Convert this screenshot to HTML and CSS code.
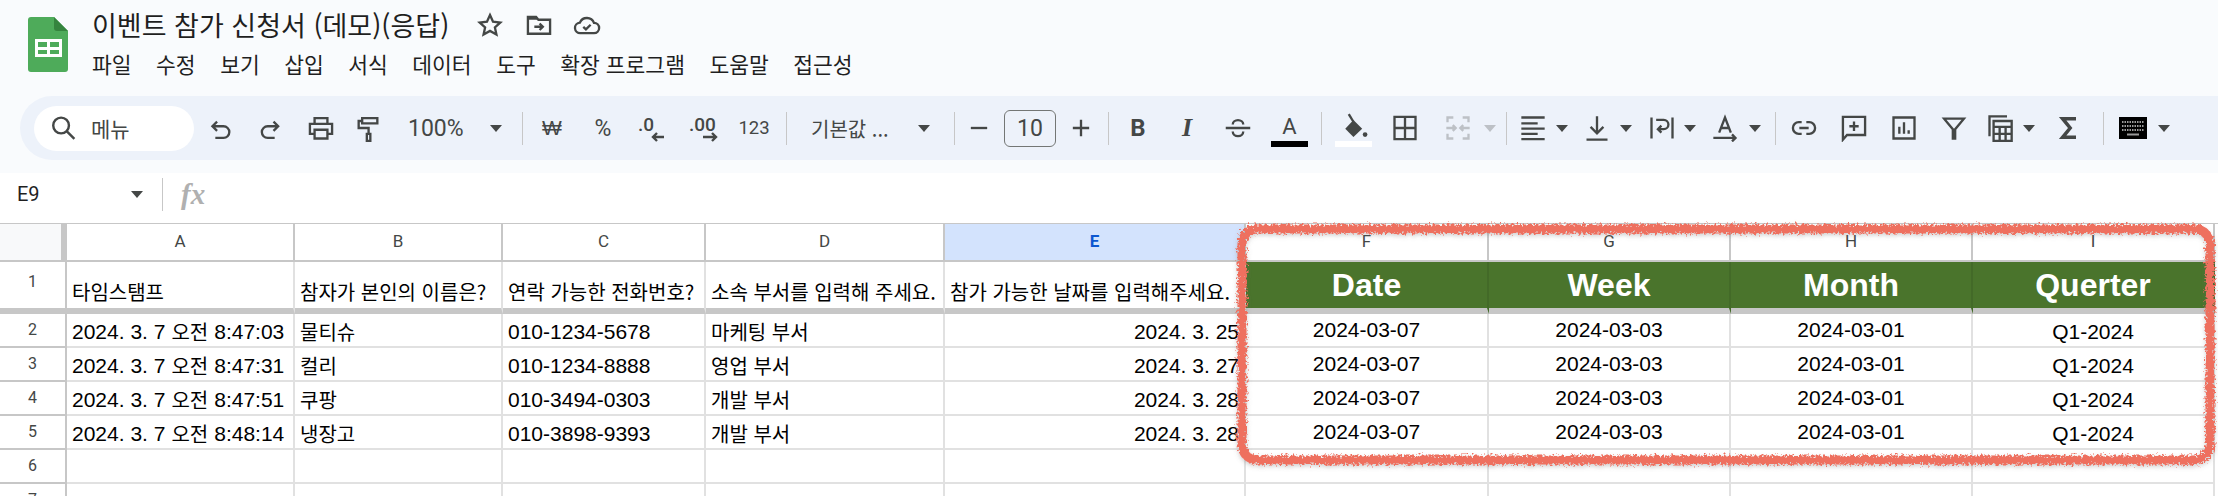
FILE: index.html
```html
<!DOCTYPE html>
<html lang="ko">
<head>
<meta charset="utf-8">
<title>이벤트 참가 신청서 (데모)(응답)</title>
<link rel="stylesheet" href="styles.css">
</head>
<body>
<div class="page">
  <header class="appbar">
    <div class="titlebar">
      <svg class="logo" viewBox="0 0 40 55">
        <path d="M3 0H26L40 14V52a3 3 0 0 1-3 3H3a3 3 0 0 1-3-3V3a3 3 0 0 1 3-3z" fill="#4eab5a"/>
        <path d="M26 0L40 14H29a3 3 0 0 1-3-3z" fill="#35843e"/>
        <path d="M7 22H34V40H7zM10 25V30H19V25zM22 25V30H31V25zM10 33V37H19V33zM22 33V37H31V33z" fill="#fff" fill-rule="evenodd"/>
      </svg>
      <div class="titletext">
        <div class="doc-row">
          <span class="doc-title">이벤트 참가 신청서 (데모)(응답)</span>
          <svg class="ic doc-star" viewBox="0 0 24 24"><path d="M12 3.500l2.600 5.700 6.200.7-4.600 4.200 1.300 6.100L12 17.100l-5.500 3.100 1.300-6.100-4.600-4.200 6.200-.7z"/></svg>
          <svg class="ic doc-folder" viewBox="0 0 24 24"><path d="M2.500 5h7l2 2.500h10v12h-19z"/><path class="solid" d="M2.500 5h7l2 2.500h-9z"/><path d="M8 13.500h7M12.500 10.700l2.800 2.800-2.800 2.800"/></svg>
          <svg class="ic doc-cloud" viewBox="0 0 24 24"><path d="M6.500 19a4.500 4.500 0 0 1-.6-9A6.500 6.500 0 0 1 18 10.200 4.400 4.400 0 0 1 18 19zM8.800 13.600l2.300 2.200 4-4"/></svg>
        </div>
        <nav class="menu">
          <span>파일</span><span>수정</span><span>보기</span><span>삽입</span><span>서식</span><span>데이터</span><span>도구</span><span>확장 프로그램</span><span>도움말</span><span>접근성</span>
        </nav>
      </div>
    </div>
    <div class="toolbar">
      <div class="search">
        <svg class="ic" viewBox="0 0 24 24"><circle cx="10" cy="9.500" r="6.500"/><path d="M14.800 14.300L21 20.500"/></svg>
        <span>메뉴</span>
      </div>
      <svg class="ic" viewBox="0 0 24 24"><path d="M9.500 6.500L5.500 10.500l4 4M5.500 10.500H15a5 5 0 0 1 0 10H8"/></svg>
      <svg class="ic" viewBox="0 0 24 24"><path d="M15 6.500l4 4-4 4M19 10.500H10a5 5 0 0 0 0 10h6"/></svg>
      <svg class="ic" viewBox="0 0 24 24"><path d="M6.500 8V3.500h11V8M6.500 17h-4V8.500h19V17h-4M6.500 13.500h11V21h-11z"/></svg>
      <svg class="ic" viewBox="0 0 24 24"><path d="M7 3.500h13V8H7zM7 6H4v6h8.500v5M11 17h3v6h-3z"/></svg>
      <span class="tool-text zoom-text">100%</span>
      <span class="caret"></span>
      <span class="sep"></span>
      <span class="glyph won">₩</span>
      <span class="glyph pct">%</span>
      <svg class="ic-px" viewBox="0 0 30 28"><text x="1" y="17">.0</text><path d="M27 23H16M20 19l-4 4 4 4"/></svg>
      <svg class="ic-px" viewBox="0 0 30 28"><text x="0" y="17">.00</text><path d="M14 23h13M23 19l4 4-4 4"/></svg>
      <span class="glyph num">123</span>
      <span class="sep"></span>
      <span class="tool-text font-name">기본값 ...</span>
      <span class="caret"></span>
      <span class="sep"></span>
      <svg class="ic" viewBox="0 0 24 24"><path d="M5 12h14"/></svg>
      <span class="size-box">10</span>
      <svg class="ic" viewBox="0 0 24 24"><path d="M5 12h14M12 5v14"/></svg>
      <span class="sep"></span>
      <span class="glyph bold">B</span>
      <span class="glyph ital">I</span>
      <svg class="ic" viewBox="0 0 24 24"><path d="M1.500 12h21M7.500 9a4.500 3.800 0 0 1 9 0M7.500 15a4.500 4 0 0 0 9 0"/></svg>
      <span class="swatch"><span class="swatch-letter">A</span><span class="bar bar-black"></span></span>
      <span class="sep"></span>
      <span class="swatch">
        <svg class="ic fill-ic" viewBox="0 0 24 24"><path d="M7.500 1l4 6.500"/><path class="solid" d="M11.500 6l7.500 7.500-7.500 7-7-7z"/><circle class="solid" cx="21.500" cy="18.500" r="2"/></svg>
        <span class="bar bar-white"></span>
      </span>
      <svg class="ic" viewBox="0 0 24 24"><path d="M3 2.500h18v19H3zM12 2.500v19M3 12h18"/></svg>
      <svg class="ic muted" viewBox="0 0 24 24"><path d="M8 3H3v4M16 3h5v4M3 17v4h5M21 17v4h-5M2 12h8M7.500 9.500L10 12l-2.500 2.500M22 12h-8M16.500 9.500L14 12l2.500 2.500"/></svg>
      <span class="caret caret-muted"></span>
      <span class="sep"></span>
      <svg class="ic" viewBox="0 0 24 24"><path d="M2 3h20M2 8h14M2 12.500h20M2 17h14M2 21.500h20"/></svg>
      <span class="caret"></span>
      <svg class="ic" viewBox="0 0 24 24"><path d="M12 2v14.500M6.500 11l5.500 5.500 5.500-5.500M3 22h18"/></svg>
      <span class="caret"></span>
      <svg class="ic" viewBox="0 0 24 24"><path d="M3 3v18M21 3v18M7 5h6.500a4 4 0 0 1 0 8H9M11.500 10l-3 3 3 3"/></svg>
      <span class="caret"></span>
      <svg class="ic" viewBox="0 0 24 24"><path d="M7 16L12 3l5 13M8.500 12h7M2 20.500h19M18 17.500l3 3-3 3"/></svg>
      <span class="caret"></span>
      <span class="sep"></span>
      <svg class="ic" viewBox="0 0 24 24"><path d="M10 7H7.500a5 5 0 0 0 0 10H10M14 7h2.500a5 5 0 0 1 0 10H14M8 12h8"/></svg>
      <svg class="ic" viewBox="0 0 24 24"><path d="M2.500 2.500h19V18H6l-3.500 4zM12 6.500v8M8 10.500h8"/></svg>
      <svg class="ic" viewBox="0 0 24 24"><path d="M3 3h18v18H3zM8 11v6M12 7v10M16 14v3"/></svg>
      <svg class="ic" viewBox="0 0 24 24"><path d="M3.500 4h17L13 13v8h-2v-8z"/></svg>
      <svg class="ic" viewBox="0 0 24 24"><path d="M3 19V2h15M6.500 6H22v17H6.500zM6.500 11H22M6.500 17H22M11.700 11v12M16.800 11v12"/></svg>
      <span class="caret"></span>
      <svg class="ic sigma" viewBox="0 0 24 24"><path d="M18 4H6.500l6.500 8-6.500 8H18"/></svg>
      <span class="sep"></span>
      <svg class="keyboard" viewBox="0 0 28 22"><rect width="28" height="22"/><path class="keys" d="M3 5h22M3 9h22M3 13h22"/><path class="space" d="M8 17.500h12"/></svg>
      <span class="caret"></span>
    </div>
  </header>

  <div class="formula">
    <span class="name-box">E9</span>
    <span class="caret"></span>
    <span class="sep"></span>
    <span class="fx">fx</span>
  </div>

  <main class="sheet">
    <div class="corner"></div>
    <div class="ch">A</div><div class="ch">B</div><div class="ch">C</div><div class="ch">D</div><div class="ch ch-on">E</div><div class="ch">F</div><div class="ch">G</div><div class="ch">H</div><div class="ch">I</div>

    <div class="rh rh-frozen">1</div>
    <div class="c frozen ko">타임스탬프</div>
    <div class="c frozen ko">참자가 본인의 이름은?</div>
    <div class="c frozen ko">연락 가능한 전화번호?</div>
    <div class="c frozen ko">소속 부서를 입력해 주세요.</div>
    <div class="c frozen ko">참가 가능한 날짜를 입력해주세요.</div>
    <div class="c frozen hd">Date</div><div class="c frozen hd">Week</div><div class="c frozen hd">Month</div><div class="c frozen hd">Querter</div>

    <div class="rh">2</div>
    <div class="c">2024. 3. 7 <span class="kr">오전</span> 8:47:03</div><div class="c ko">물티슈</div><div class="c">010-1234-5678</div><div class="c ko">마케팅 부서</div><div class="c right">2024. 3. 25</div>
    <div class="c mid">2024-03-07</div><div class="c mid">2024-03-03</div><div class="c mid">2024-03-01</div><div class="c ctr">Q1-2024</div>

    <div class="rh">3</div>
    <div class="c">2024. 3. 7 <span class="kr">오전</span> 8:47:31</div><div class="c ko">컬리</div><div class="c">010-1234-8888</div><div class="c ko">영업 부서</div><div class="c right">2024. 3. 27</div>
    <div class="c mid">2024-03-07</div><div class="c mid">2024-03-03</div><div class="c mid">2024-03-01</div><div class="c ctr">Q1-2024</div>

    <div class="rh">4</div>
    <div class="c">2024. 3. 7 <span class="kr">오전</span> 8:47:51</div><div class="c ko">쿠팡</div><div class="c">010-3494-0303</div><div class="c ko">개발 부서</div><div class="c right">2024. 3. 28</div>
    <div class="c mid">2024-03-07</div><div class="c mid">2024-03-03</div><div class="c mid">2024-03-01</div><div class="c ctr">Q1-2024</div>

    <div class="rh">5</div>
    <div class="c">2024. 3. 7 <span class="kr">오전</span> 8:48:14</div><div class="c ko">냉장고</div><div class="c">010-3898-9393</div><div class="c ko">개발 부서</div><div class="c right">2024. 3. 28</div>
    <div class="c mid">2024-03-07</div><div class="c mid">2024-03-03</div><div class="c mid">2024-03-01</div><div class="c ctr">Q1-2024</div>

    <div class="rh">6</div>
    <div class="c"></div><div class="c"></div><div class="c"></div><div class="c"></div><div class="c"></div><div class="c"></div><div class="c"></div><div class="c"></div><div class="c"></div>

    <div class="rh">7</div>
    <div class="c"></div><div class="c"></div><div class="c"></div><div class="c"></div><div class="c"></div><div class="c"></div><div class="c"></div><div class="c"></div><div class="c"></div>
  </main>

  <svg class="annotation" viewBox="0 0 2218 496">
    <defs>
      <filter id="rough" x="-2%" y="-5%" width="104%" height="110%">
        <feTurbulence type="fractalNoise" baseFrequency="0.42" numOctaves="3" seed="4" result="n"/>
        <feDisplacementMap in="SourceGraphic" in2="n" scale="9" result="d"/>
        <feDropShadow in="d" dx="0" dy="2" stdDeviation="2" flood-color="#666" flood-opacity="0.3"/>
      </filter>
    </defs>
    <rect x="1242" y="229" width="968" height="231" rx="15" filter="url(#rough)"/>
  </svg>
</div>
</body>
</html>
```
FILE: styles.css
```css
* { box-sizing: border-box; }
html, body { margin: 0; padding: 0; }
body {
  font-family: "Noto Sans CJK KR", "Noto Sans", sans-serif;
  color: #000;
  background: #fff;
}
.page {
  position: relative;
  width: 2218px;
  height: 496px;
  overflow: hidden;
}

/* App bar */
.appbar {
  height: 173px;
  background: #f9fbfd;
}
.titlebar {
  display: flex;
  height: 96px;
  padding-left: 28px;
}
.logo {
  width: 40px;
  height: 55px;
  margin-top: 17px;
  flex: none;
}
.titletext {
  margin-left: 24px;
}
.doc-row {
  display: flex;
  align-items: center;
  height: 49px;
}
.doc-title {
  font-size: 27px;
  line-height: 49px;
  color: #1f1f1f;
  white-space: nowrap;
}
.doc-star { width: 30px; height: 30px; margin-left: 27px; }
.doc-folder { width: 30px; height: 30px; margin-left: 21px; }
.doc-cloud { width: 34px; height: 34px; margin-left: 20px; }
.menu {
  display: flex;
  gap: 24.500px;
  font-size: 21.500px;
  line-height: 30px;
  color: #1f1f1f;
  white-space: nowrap;
}

/* Icons */
.ic {
  display: block;
  width: 28px;
  height: 28px;
  fill: none;
  stroke: #444746;
  stroke-width: 2;
}
.ic .solid { fill: #444746; stroke: none; }
.ic-px {
  display: block;
  width: 30px;
  height: 28px;
  overflow: visible;
}
.ic-px text {
  font-family: Roboto, sans-serif;
  font-size: 19px;
  font-weight: 500;
  fill: #444746;
}
.ic-px path {
  fill: none;
  stroke: #444746;
  stroke-width: 2.400;
}
.muted { stroke: #bdc1c6; }
.sigma { stroke-width: 3; }
.keyboard { display: block; width: 28px; height: 22px; }
.keys {
  stroke: #9a9a9a;
  stroke-width: 2.200;
  stroke-dasharray: 1.500 1;
  fill: none;
}
.space { stroke: #9a9a9a; stroke-width: 2; fill: none; }

/* Toolbar */
.toolbar {
  display: grid;
  grid-template-columns: 172px 50px 51px 47px 54px 82px 32px 16px 51px 48px 52px 51px 46px 25px 107px 36px 11px 39px 63px 41px 16px 49px 51px 47px 50px 14px 56px 53px 40px 22px 13px 37px 27px 37px 28px 36px 27px 38px 26px 15px 50px 50px 50px 46px 37px 32px 48px 16px 39px 1fr;
  align-items: center;
  justify-items: start;
  height: 64px;
  margin-left: 20px;
  padding-left: 14px;
  background: #edf2fa;
  border-radius: 32px 0 0 32px;
}
.search {
  display: flex;
  align-items: center;
  gap: 13px;
  width: 160px;
  height: 45px;
  padding-left: 15px;
  background: #fff;
  border-radius: 23px;
  font-size: 21px;
  color: #444746;
}
.search .ic { width: 29px; height: 29px; }
.tool-text {
  color: #444746;
  white-space: nowrap;
}
.zoom-text {
  font-family: Roboto, sans-serif;
  font-size: 23px;
}
.font-name { font-size: 20px; }
.caret {
  display: block;
  width: 0;
  height: 0;
  border-left: 6px solid transparent;
  border-right: 6px solid transparent;
  border-top: 7px solid #444746;
}
.caret-muted { border-top-color: #bdc1c6; }
.sep {
  display: block;
  width: 1px;
  height: 33px;
  background: #c7c7c7;
}
.glyph {
  display: flex;
  justify-content: center;
  width: 28px;
  color: #444746;
  font-family: Roboto, sans-serif;
  white-space: nowrap;
}
.won { font-size: 21px; font-family: "Liberation Sans", sans-serif; }
.pct { font-size: 23px; }
.num { font-size: 18.500px; }
.bold { font-size: 24px; font-weight: 700; }
.ital { font-size: 26px; font-weight: 700; font-style: italic; font-family: "Liberation Serif", serif; }
.size-box {
  display: flex;
  align-items: center;
  justify-content: center;
  width: 52px;
  height: 37px;
  border: 1px solid #747775;
  border-radius: 6px;
  font-family: Roboto, sans-serif;
  font-size: 23px;
  color: #444746;
}
.swatch {
  display: flex;
  flex-direction: column;
  align-items: center;
  width: 37px;
  height: 34px;
  margin-top: 4px;
}
.swatch-letter {
  font-family: Roboto, sans-serif;
  font-size: 22px;
  line-height: 28px;
  color: #444746;
}
.fill-ic { width: 28px; height: 28px; }
.bar {
  display: block;
  width: 37px;
  height: 6px;
  flex: none;
}
.bar-black { background: #000; }
.bar-white { background: #fff; }

/* Formula bar */
.formula {
  display: flex;
  align-items: center;
  height: 50px;
  padding: 0 0 8px 17px;
  background: #fff;
}
.name-box {
  width: 114px;
  font-family: Roboto, sans-serif;
  font-size: 20px;
  color: #1f1f1f;
}
.formula .sep {
  margin-left: 19px;
  margin-right: 18px;
}
.fx {
  font-family: "Liberation Serif", serif;
  font-style: italic;
  font-weight: 700;
  font-size: 29px;
  color: #b0b0b0;
}

/* Sheet */
.sheet {
  display: grid;
  grid-template-columns: 67px 228px 208px 203px 239px 301px 243px 242px 242px 242px;
  grid-template-rows: 38px 52px 34px 34px 34px 34px 34px 34px;
  border-top: 1px solid #c7c7c7;
  font-family: "Liberation Sans", "Noto Sans CJK KR", sans-serif;
  font-size: 21px;
  line-height: 24px;
}
.corner {
  background: #f8f9fa;
  border-right: 6px solid #c7c7c7;
  border-bottom: 2px solid #c7c7c7;
}
.ch {
  display: flex;
  align-items: center;
  justify-content: center;
  border-right: 2px solid #c7c7c7;
  border-bottom: 2px solid #c7c7c7;
  font-family: Roboto, sans-serif;
  font-size: 17px;
  color: #444746;
  padding-bottom: 2px;
}
.ch-on {
  background: #d3e3fd;
  font-weight: 700;
  color: #0b57d0;
}
.rh {
  display: flex;
  align-items: center;
  justify-content: center;
  border-right: 2px solid #c7c7c7;
  border-bottom: 2px solid #c7c7c7;
  font-family: Roboto, sans-serif;
  font-size: 16px;
  color: #444746;
}
.rh-frozen {
  border-bottom: 6px solid #c7c7c7;
  padding-bottom: 6px;
}
.c {
  display: flex;
  align-items: flex-end;
  padding: 0 5px 2px;
  border-right: 2px solid #e1e1e1;
  border-bottom: 2px solid #e1e1e1;
  white-space: nowrap;
  overflow: hidden;
}
.frozen {
  border-bottom: 6px solid #c7c7c7;
  padding-bottom: 4px;
}
.ko { font-size: 20px; font-family: "Noto Sans CJK KR", sans-serif; }
.kr { font-size: 20px; font-family: "Noto Sans CJK KR", sans-serif; margin: 0 6px; }
.right { justify-content: flex-end; }
.mid { justify-content: center; align-items: center; padding-bottom: 0; }
.ctr { justify-content: center; }
.hd {
  align-items: center;
  justify-content: center;
  padding-bottom: 0;
  background: #4a742c;
  border-right-color: #436a28;
  color: #fff;
  font-size: 32px;
  font-weight: 700;
}

/* Hand-drawn highlight over the sheet */
.annotation {
  position: absolute;
  left: 0;
  top: 0;
  width: 2218px;
  height: 496px;
  pointer-events: none;
}
.annotation rect {
  fill: none;
  stroke: #ee6f5f;
  stroke-width: 9;
}
```
